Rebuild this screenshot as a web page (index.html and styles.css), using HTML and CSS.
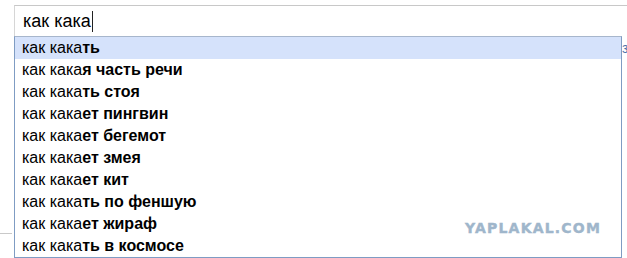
FILE: index.html
```html
<!DOCTYPE html>
<html lang="ru">
<head>
  <meta charset="UTF-8">
  <title>как кака</title>
  <link rel="stylesheet" href="styles.css">
</head>
<body>
  <div class="page">
    <div class="search">
      <span class="query">как кака</span><span class="caret"></span>
    </div>
    <ul class="suggest">
      <li class="active">как кака<b>ть</b></li>
      <li>как кака<b>я часть речи</b></li>
      <li>как кака<b>ть стоя</b></li>
      <li>как кака<b>ет пингвин</b></li>
      <li>как кака<b>ет бегемот</b></li>
      <li>как кака<b>ет змея</b></li>
      <li>как кака<b>ет кит</b></li>
      <li>как кака<b>ть по феншую</b></li>
      <li>как кака<b>ет жираф</b></li>
      <li>как кака<b>ть в космосе</b></li>
    </ul>
    <span class="edge-line"></span>
    <span class="side-glyph">з</span>
    <span class="mark">YAPLAKAL.COM</span>
  </div>
</body>
</html>
```

FILE: styles.css
```css
body {
  margin: 0;
  background: #fff;
  font-family: Arial, "Liberation Sans", sans-serif;
  color: #000;
}
.page {
  position: relative;
  width: 627px;
  height: 258px;
  padding: 5px 0 0 14px;
  box-sizing: border-box;
  overflow: hidden;
}
.search {
  display: flex;
  align-items: center;
  height: 31px;
  border-top: 1px solid #c8c8c8;
  border-left: 1px solid #d6d6d6;
  padding-left: 8px;
  box-sizing: border-box;
  font-size: 18px;
}
.query {
  line-height: 20px;
}
.caret {
  width: 1px;
  height: 21px;
  margin-left: 1px;
  background: #222;
}
.suggest {
  list-style: none;
  margin: 0;
  padding: 0;
  width: 608px;
  height: 222px;
  box-sizing: border-box;
  border: 1px solid #7f9cc3;
  border-top-color: #a7b6cc;
}
.suggest li {
  height: 22px;
  line-height: 22px;
  padding-left: 7px;
  font-size: 16px;
}
.suggest li.active {
  background: #d5e2fb;
}
.suggest b {
  font-weight: bold;
}
.edge-line {
  position: absolute;
  left: 0;
  top: 233px;
  width: 12px;
  height: 1px;
  background: #c9c9c9;
}
.side-glyph {
  position: absolute;
  left: 622px;
  top: 40px;
  font-size: 14px;
  color: #4a6ea8;
}
.mark {
  position: absolute;
  left: 465px;
  top: 220px;
  font-family: "DejaVu Sans", sans-serif;
  font-weight: 900;
  font-size: 14px;
  letter-spacing: 1.2px;
  color: #9fb6cb;
  -webkit-text-stroke: 0.4px #9fb6cb;
}
```
